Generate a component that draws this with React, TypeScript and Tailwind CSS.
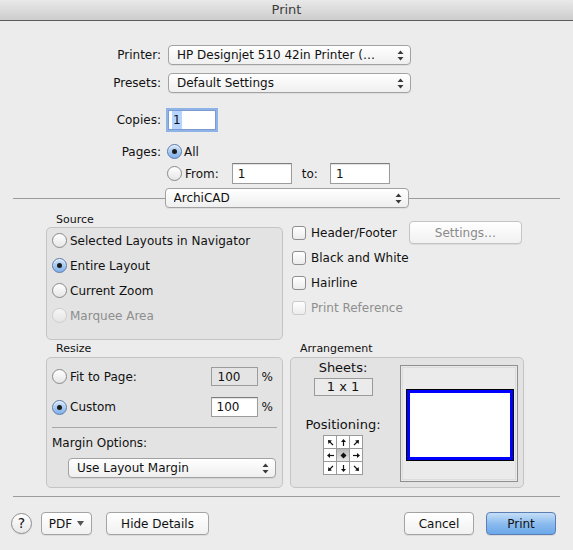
import type {ReactNode} from 'react'

const font = {fontFamily: '"Lucida Grande", "DejaVu Sans", sans-serif'}

function UpDown() {
  return (
    <svg width="7" height="11" viewBox="0 0 7 11" className="shrink-0">
      <path d="M3.5 0.5 L6.5 4 L0.5 4 Z" fill="#3a3a3a" />
      <path d="M3.5 10.5 L6.5 7 L0.5 7 Z" fill="#3a3a3a" />
    </svg>
  )
}

function Popup({label, className}: {label: string; className: string}) {
  return (
    <div
      className={`flex h-[20px] items-center justify-between rounded-[4px] border border-[#a2a2a2] bg-linear-to-b from-white to-[#efefef] pl-[8px] pr-[6px] shadow-[0_1px_0_rgba(0,0,0,0.06)] ${className}`}>
      <span className="truncate whitespace-nowrap">{label}</span>
      <UpDown />
    </div>
  )
}

function Radio({on, disabled}: {on?: boolean; disabled?: boolean}) {
  if (on)
    return (
      <span className="flex h-[15px] w-[15px] shrink-0 items-center justify-center rounded-full border border-[#5a7aa8] bg-linear-to-b from-[#cfe3fa] to-[#7fb0ea] shadow-[inset_0_1px_1px_rgba(255,255,255,0.8)]">
        <span className="h-[5px] w-[5px] rounded-full bg-[#1b1b1b]" />
      </span>
    )
  return (
    <span
      className={`h-[15px] w-[15px] shrink-0 rounded-full border bg-linear-to-b from-white to-[#e6e6e6] ${
        disabled ? 'border-[#c4c4c4] opacity-70' : 'border-[#8a8a8a]'
      }`}
    />
  )
}

function Check({disabled}: {disabled?: boolean}) {
  return (
    <span
      className={`h-[14px] w-[14px] shrink-0 rounded-[3px] border bg-linear-to-b from-white to-[#ececec] ${
        disabled ? 'border-[#cacaca]' : 'border-[#8e8e8e]'
      }`}
    />
  )
}

function Field({value, className}: {value: string; className: string}) {
  return (
    <div
      className={`flex items-center border border-[#9c9c9c] border-t-[#7d7d7d] bg-white pl-[5px] shadow-[inset_0_1px_1px_rgba(0,0,0,0.12)] ${className}`}>
      {value}
    </div>
  )
}

function Button({children, className}: {children: ReactNode; className: string}) {
  return (
    <div
      className={`flex h-[23px] items-center justify-center rounded-[4px] border border-[#a3a3a3] bg-linear-to-b from-white to-[#f1f1f1] shadow-[0_1px_0_rgba(0,0,0,0.07)] ${className}`}>
      {children}
    </div>
  )
}

function Arrow({rot, dot}: {rot?: number; dot?: boolean}) {
  return (
    <div
      className={`flex h-[13px] w-[13px] items-center justify-center border-r border-b border-[#9a9a9a] ${
        dot ? 'bg-linear-to-b from-[#b9b9b9] to-[#e6e6e6]' : 'bg-white'
      }`}>
      <svg width="9" height="9" viewBox="0 0 9 9">
        {dot ? (
          <path d="M4.5 1.5 L7.5 4.5 L4.5 7.5 L1.5 4.5 Z" fill="#111" />
        ) : (
          <g transform={`rotate(${rot} 4.5 4.5)`}>
            <path d="M4.5 8 L4.5 2.5" stroke="#111" strokeWidth="1.2" />
            <path d="M4.5 1 L7 4 L2 4 Z" fill="#111" />
          </g>
        )}
      </svg>
    </div>
  )
}

export default function App() {
  return (
    <div style={font} className="flex h-[550px] w-[573px] flex-col bg-[#ececec] text-[12px] text-[#111]">
      {/* title bar */}
      <div className="flex h-[21px] shrink-0 items-center justify-center border-b border-[#5c5c5c] bg-linear-to-b from-[#e9e9e9] to-[#cdcdcd] text-[13px] text-[#3c3c3c]">
        Print
      </div>

      {/* printer / presets */}
      <div className="mt-[24px] flex items-center">
        <div className="w-[161px] text-right">Printer:</div>
        <Popup label="HP Designjet 510 42in Printer (…" className="ml-[7px] w-[243px]" />
      </div>
      <div className="mt-[8px] flex items-center">
        <div className="w-[161px] text-right">Presets:</div>
        <Popup label="Default Settings" className="ml-[7px] w-[243px]" />
      </div>

      {/* copies */}
      <div className="mt-[17px] flex items-center">
        <div className="w-[161px] text-right">Copies:</div>
        <div className="ml-[7px] flex h-[20px] w-[48px] items-center border border-[#7d9bd0] bg-white pl-[3px] shadow-[0_0_0_2px_rgba(110,160,230,0.75)]">
          <span className="bg-[#b5d5ff] px-[1px]">1</span>
        </div>
      </div>

      {/* pages */}
      <div className="mt-[12px] flex h-[19px] items-center">
        <div className="w-[161px] text-right">Pages:</div>
        <div className="ml-[6px] flex items-center gap-[2px]">
          <Radio on />
          <span>All</span>
        </div>
      </div>
      <div className="mt-[2px] flex h-[21px] items-center">
        <div className="w-[167px]" />
        <Radio />
        <span className="ml-[3px]">From:</span>
        <Field value="1" className="ml-[13px] h-[21px] w-[60px]" />
        <span className="ml-[10px]">to:</span>
        <Field value="1" className="ml-[12px] h-[21px] w-[60px]" />
      </div>

      {/* section selector */}
      <div className="mt-[4px] flex items-center px-[13px]">
        <div className="h-px flex-1 bg-[#9c9c9c]" />
        <Popup label="ArchiCAD" className="w-[244px]" />
        <div className="h-px flex-1 bg-[#9c9c9c]" />
      </div>

      {/* main area */}
      <div className="mt-[5px] flex flex-col px-[46px]">
        <div className="flex gap-[7px]">
          <div className="flex w-[237px] flex-col">
            <div className="h-[14px] pl-[10px] text-[11px] leading-[14px]">Source</div>
            <div className="flex h-[113px] flex-col rounded-[5px] border border-[#c4c4c4] bg-[#e3e3e3] pl-[5px]">
              <div className="flex h-[25px] items-center gap-[3px]">
                <Radio />
                <span>Selected Layouts in Navigator</span>
              </div>
              <div className="flex h-[25px] items-center gap-[3px]">
                <Radio on />
                <span>Entire Layout</span>
              </div>
              <div className="flex h-[25px] items-center gap-[3px]">
                <Radio />
                <span>Current Zoom</span>
              </div>
              <div className="flex h-[25px] items-center gap-[3px] text-[#8e8e8e]">
                <Radio disabled />
                <span>Marquee Area</span>
              </div>
            </div>
          </div>

          <div className="flex w-[234px] flex-col pt-[7px] pl-[2px]">
            <div className="flex h-[25px] items-center">
              <Check />
              <span className="ml-[5px]">Header/Footer</span>
              <Button className="ml-[12px] h-[21px] w-[113px] border-[#c4c4c4] text-[#8a8a8a]">Settings…</Button>
            </div>
            <div className="flex h-[25px] items-center">
              <Check />
              <span className="ml-[5px]">Black and White</span>
            </div>
            <div className="flex h-[25px] items-center">
              <Check />
              <span className="ml-[5px]">Hairline</span>
            </div>
            <div className="flex h-[25px] items-center text-[#8e8e8e]">
              <Check disabled />
              <span className="ml-[5px]">Print Reference</span>
            </div>
          </div>
        </div>

        <div className="mt-[2px] flex gap-[7px]">
          {/* resize */}
          <div className="flex w-[237px] flex-col">
            <div className="h-[15px] pl-[10px] text-[11px] leading-[14px]">Resize</div>
            <div className="flex h-[131px] flex-col rounded-[5px] border border-[#c4c4c4] bg-[#e3e3e3]">
              <div className="mt-[9px] flex h-[19px] items-center pr-[9px] pl-[5px]">
                <Radio />
                <span className="ml-[3px] flex-1">Fit to Page:</span>
                <div className="flex h-[19px] w-[47px] items-center border border-[#9c9c9c] bg-[#e4e4e4] pl-[6px]">100</div>
                <span className="ml-[4px]">%</span>
              </div>
              <div className="mt-[11px] flex h-[20px] items-center pr-[9px] pl-[5px]">
                <Radio on />
                <span className="ml-[3px] flex-1">Custom</span>
                <Field value="100" className="h-[20px] w-[47px]" />
                <span className="ml-[4px]">%</span>
              </div>
              <div className="mx-[5px] mt-[10px] h-px bg-[#a8a8a8]" />
              <div className="mt-[8px] pl-[5px] leading-[15px]">Margin Options:</div>
              <Popup label="Use Layout Margin" className="mt-[7px] mr-[6px] ml-[21px]" />
            </div>
          </div>

          {/* arrangement */}
          <div className="flex w-[234px] flex-col">
            <div className="h-[15px] pl-[10px] text-[11px] leading-[14px]">Arrangement</div>
            <div className="flex h-[131px] rounded-[5px] border border-[#c4c4c4] bg-[#e3e3e3]">
              <div className="flex w-[104px] flex-col items-center">
                <div className="mt-[2px] text-[13px] leading-[16px]">Sheets:</div>
                <div className="mt-[2px] flex h-[18px] w-[59px] items-center justify-center border border-[#9a9a9a] bg-[#ebebeb] text-[13px]">
                  1 x 1
                </div>
                <div className="mt-[21px] text-[13px] leading-[16px]">Positioning:</div>
                <div className="mt-[2px] grid grid-cols-3 border-t border-l border-[#9a9a9a]">
                  <Arrow rot={-45} />
                  <Arrow rot={0} />
                  <Arrow rot={45} />
                  <Arrow rot={-90} />
                  <Arrow dot />
                  <Arrow rot={90} />
                  <Arrow rot={-135} />
                  <Arrow rot={180} />
                  <Arrow rot={135} />
                </div>
              </div>
              <div className="mt-[7px] ml-[5px] h-[117px] w-[118px] border border-[#8f8f8f] bg-[#e9e9e9] p-[1px]">
                <div className="h-full w-full border border-[#dcdcdc] bg-[#ebebeb] pt-[21px] pl-[3px]">
                  <div className="h-[72px] w-[108px] border border-black">
                    <div className="h-full w-full border-[3px] border-[#0000ff] bg-white" />
                  </div>
                </div>
              </div>
            </div>
          </div>
        </div>
      </div>

      {/* bottom separator */}
      <div className="mx-[13px] mt-[8px] h-px bg-[#9c9c9c]" />

      {/* buttons */}
      <div className="mt-[15px] flex items-center pr-[17px] pl-[11px]">
        <div className="flex h-[21px] w-[21px] items-center justify-center rounded-full border border-[#8e8e8e] bg-linear-to-b from-white to-[#e8e8e8] text-[14px] shadow-[0_1px_0_rgba(0,0,0,0.08)]">
          ?
        </div>
        <Button className="ml-[9px] w-[51px] gap-[5px]">
          <span>PDF</span>
          <svg width="7" height="5" viewBox="0 0 7 5">
            <path d="M0 0 L7 0 L3.5 5 Z" fill="#555" />
          </svg>
        </Button>
        <Button className="ml-[14px] w-[103px]">Hide Details</Button>
        <div className="flex-1" />
        <Button className="w-[70px]">Cancel</Button>
        <div className="ml-[12px] flex h-[23px] w-[70px] items-center justify-center rounded-[4px] border border-[#5b7fb5] bg-linear-to-b from-[#c6def6] via-[#8cbcef] to-[#6ba7ea] shadow-[0_1px_0_rgba(0,0,0,0.08)]">
          Print
        </div>
      </div>
    </div>
  )
}
